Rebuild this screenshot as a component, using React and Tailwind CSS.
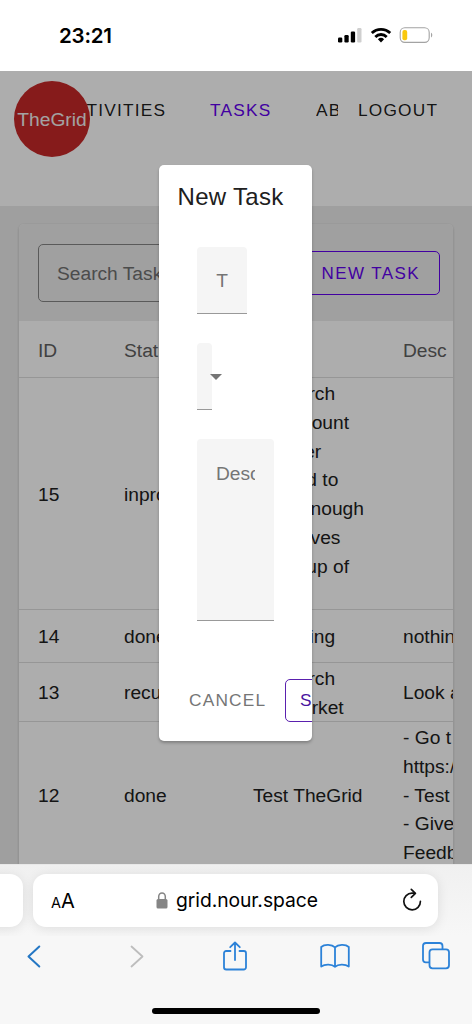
import React from "react";

const TASKS = [
  {
    id: 15,
    status: "inprogress",
    title: ["Research", "the amount", "of water", "needed to", "grow enough", "tea leaves", "for a cup of", "tea"],
    desc: [],
    height: "h-[232px]",
  },
  { id: 14, status: "done", title: ["Test thing"], desc: ["nothing"], height: "h-[53px]" },
  { id: 13, status: "recurring", title: ["Research", "the market"], desc: ["Look at"], height: "h-[59px]" },
  {
    id: 12,
    status: "done",
    title: ["Test TheGrid"],
    desc: ["- Go t", "https://grid", "- Test", "- Give", "Feedback"],
    height: "h-[146px]",
  },
];

const COLUMNS = "grid grid-cols-[86px_129px_150px_200px] items-center";

function Lines({ items }) {
  return (
    <div className="pt-[2px] pl-[19px] leading-[28.8px] whitespace-nowrap">
      {items.map((line) => (
        <div key={line}>{line}</div>
      ))}
    </div>
  );
}

function StatusBar() {
  return (
    <header className="flex h-[71px] shrink-0 items-start justify-between bg-white pt-[24px] pr-[39px] pl-[59px]">
      <span className="font-['Inter','Liberation_Sans',sans-serif] text-[20.5px] leading-[24px] font-semibold tracking-[-0.2px] text-black">
        23:21
      </span>
      <svg className="mt-[2px]" width="96" height="20" viewBox="0 0 96 20">
        <rect x="1" y="11.5" width="4.3" height="5" rx="1.2" />
        <rect x="7.4" y="9" width="4.3" height="7.5" rx="1.2" />
        <rect x="13.8" y="5.5" width="4.3" height="11" rx="1.2" />
        <rect x="20.2" y="2" width="4.3" height="14.5" rx="1.2" fill="#cfcfcf" />
        <g fill="none" stroke="#000" strokeWidth="2.8">
          <path d="M34.8 7.1a13.2 13.2 0 0 1 18.4 0" />
          <path d="M38.3 10.9a8 8 0 0 1 11.4 0" />
        </g>
        <path d="M40.9 13.3a4.5 4.5 0 0 1 6.2 0L44 16.6Z" />
        <rect x="63.2" y="1.8" width="29" height="14.6" rx="4.6" fill="none" stroke="#a3a3a3" strokeWidth="1.1" />
        <rect x="65.4" y="4" width="4.8" height="10.2" rx="2" fill="#f9c80e" />
        <path d="M94 6.8c1.7.6 1.7 4 0 4.6Z" fill="#a3a3a3" />
      </svg>
    </header>
  );
}

function NavBar() {
  return (
    <div className="relative h-[135px] shrink-0 bg-white pt-[25px]">
      <nav className="flex text-[17.3px] leading-[28px] tracking-[1.2px] whitespace-nowrap text-black/90">
        <span className="w-[210px] pl-[60px]">ACTIVITIES</span>
        <span className="w-[106px] text-[#6200ee]">TASKS</span>
        <span className="w-[22px] overflow-hidden">ABOUT</span>
        <span className="pl-[20px]">LOGOUT</span>
      </nav>
      <div className="absolute top-[10px] left-[14px] flex size-[76px] items-center justify-center rounded-full bg-[#c62828] pt-[2px] text-[19.2px] text-[#f0f0f0]">
        TheGrid
      </div>
    </div>
  );
}

function TaskTable() {
  return (
    <section className="mx-[19px] mt-[18px] h-[660px] w-[434px] shrink-0 overflow-hidden rounded-[5px] bg-white shadow-[0_1px_3px_rgba(0,0,0,0.2)]">
      <div className="flex h-[97px] items-center justify-between bg-[#ececec] pr-[13px] pl-[19px]">
        <div className="flex h-[58px] w-[240px] items-center rounded-[5px] border border-[#858585] pt-[3px] pl-[18px] text-[19.2px] text-[#707070]">
          Search Tasks
        </div>
        <div className="flex h-[44px] w-[140px] items-center justify-end rounded-[5px] border-[1.5px] border-[#6200ee] pt-[2px] pr-[19px] text-[17px] tracking-[1.4px] whitespace-nowrap text-[#6200ee]">
          NEW TASK
        </div>
      </div>
      <div className={`${COLUMNS} h-[57px] border-b border-[#dedede] pt-[2px] text-[#606060]`}>
        <Lines items={["ID"]} />
        <Lines items={["Status"]} />
        <Lines items={["Title"]} />
        <div className="w-[63px] overflow-hidden">
          <Lines items={["Desc"]} />
        </div>
      </div>
      {TASKS.map((task) => (
        <div key={task.id} className={`${COLUMNS} ${task.height} border-b border-[#dedede] text-[#202020]`}>
          <Lines items={[task.id]} />
          <Lines items={[task.status]} />
          <Lines items={task.title} />
          <Lines items={task.desc} />
        </div>
      ))}
    </section>
  );
}

function NewTaskDialog() {
  return (
    <div className="absolute inset-0 flex items-start bg-black/32 pt-[94px] pl-[159px]">
      <div className="flex h-[576px] w-[153px] flex-col overflow-hidden rounded-[5px] bg-white shadow-[0_2px_3px_rgba(0,0,0,0.25)]">
        <h2 className="pt-[13px] pl-[18.5px] text-[24px] leading-[38px] tracking-[0.3px] whitespace-nowrap text-[#202020]">
          New Task
        </h2>
        <div className="flex flex-col gap-[29px] pt-[31px] pl-[38px] text-[19.2px] text-[#757575]">
          <div className="flex h-[67px] w-[50px] items-center justify-center rounded-t-[4px] border-b border-[#999] bg-[#f5f5f5] pt-[3px]">
            T
          </div>
          <div className="flex items-center">
            <div className="h-[67px] w-[15px] shrink-0 rounded-t-[4px] border-b border-[#999] bg-[#f5f5f5]" />
            <svg className="-ml-[2px]" width="12" height="6" viewBox="0 0 12 6">
              <path d="M0 0h12L6 6Z" fill="#757575" />
            </svg>
          </div>
          <div className="h-[182px] w-[77px] rounded-t-[4px] border-b border-[#999] bg-[#f5f5f5] px-[19px] pt-[20px]">
            <div className="w-[39px] overflow-hidden leading-[29px]">Description</div>
          </div>
        </div>
        <div className="flex items-center pt-[58px] pl-[30px] text-[17.3px] tracking-[1.2px] whitespace-nowrap">
          <span className="w-[96px] shrink-0 text-[#757575]">CANCEL</span>
          <span className="flex h-[43px] w-[90px] shrink-0 items-center rounded-[5px] border-[1.5px] border-[#5a20ae] pl-[14px] text-[#4a16a0]">
            SAVE
          </span>
        </div>
      </div>
    </div>
  );
}

function BrowserBar() {
  return (
    <footer className="flex h-[160px] shrink-0 flex-col bg-[#f7f7f7]">
      <div className="flex h-[72px] overflow-hidden border-t border-[#e8e8e8] bg-linear-to-b from-[#f0f0f0] to-[#f7f7f7] pt-[9px]">
        <div className="-ml-[20px] h-[53px] w-[43px] shrink-0 rounded-[13px] bg-white shadow-[0_2px_12px_rgba(0,0,0,0.1)]" />
        <div className="ml-[10px] flex h-[53px] w-[405px] shrink-0 items-center justify-between rounded-[13px] bg-white pr-[16px] pl-[18px] font-['Inter','Liberation_Sans',sans-serif] text-black shadow-[0_2px_12px_rgba(0,0,0,0.1)]">
          <span className="flex w-[105px] items-baseline">
            <span className="text-[14.5px]">A</span>
            <span className="text-[20px]">A</span>
          </span>
          <span className="flex flex-1 items-center gap-[8px]">
            <svg width="12" height="17" viewBox="0 0 12 17">
              <rect x=".5" y="7" width="11" height="9.5" rx="1.5" fill="#858585" />
              <path d="M2.7 8V4.6a3.3 3.7 0 0 1 6.6 0V8" fill="none" stroke="#858585" strokeWidth="1.5" />
            </svg>
            <span className="text-[19.3px] tracking-[-0.05px]">grid.nour.space</span>
          </span>
          <svg className="-mt-[2px]" width="20" height="24" viewBox="0 0 20 24" fill="none" stroke="#111" strokeWidth="1.7" strokeLinecap="round" strokeLinejoin="round">
            <path d="M12.6 5.2H10a8.3 8.3 0 1 0 8.4 8.2" />
            <path d="m9.3 1.4 4.1 3.9-4.1 4" />
          </svg>
        </div>
      </div>
      <div className="flex h-[40px] items-center pl-[27px]">
        <svg width="14" height="23" viewBox="0 0 14 23" fill="none" stroke="#2477c4" strokeWidth="2" strokeLinecap="round" strokeLinejoin="round">
          <path d="M12.3 1.5 1.5 11.5l10.8 10" />
        </svg>
        <svg className="ml-[89px]" width="14" height="23" viewBox="0 0 14 23" fill="none" stroke="#bdbdbd" strokeWidth="1.8" strokeLinecap="round" strokeLinejoin="round">
          <path d="m1.5 1.5 11 10-11 10" />
        </svg>
        <svg className="ml-[79px]" width="24" height="30" viewBox="0 0 24 30" fill="none" stroke="#2c82d8" strokeWidth="1.8" strokeLinecap="round" strokeLinejoin="round">
          <path d="M7.5 10H3.2A2.2 2.2 0 0 0 1 12.2v14A2.3 2.3 0 0 0 3.3 28.5h17.4a2.3 2.3 0 0 0 2.3-2.3v-14A2.2 2.2 0 0 0 20.8 10h-4.3" />
          <path d="M12 19V1.5M7.2 6.2 12 1.5l4.8 4.7" />
        </svg>
        <svg className="ml-[73px]" width="30" height="24" viewBox="0 0 30 24" fill="none" stroke="#2c82d8" strokeWidth="1.8" strokeLinecap="round" strokeLinejoin="round">
          <path d="M15 3.4C12 .4 4.5 0 1.2 3v19.5C5 19.8 12 20 15 22.8c3-2.8 10-3 13.800-.3V3C25.500 0 18 .4 15 3.4Zm0 0v19.4" />
        </svg>
        <svg className="ml-[72px]" width="28" height="28" viewBox="0 0 28 28" fill="none" stroke="#2c82d8" strokeWidth="1.8" strokeLinecap="round" strokeLinejoin="round">
          <path d="M7 20.3H3.8A2.8 2.8 0 0 1 1 17.5V4a3 3 0 0 1 3-3h13.5a3 3 0 0 1 3 3v3" />
          <rect x="7.5" y="7.3" width="19.5" height="19" rx="3" />
        </svg>
      </div>
      <div className="mx-auto mt-[32px] h-[6px] w-[168px] rounded-full bg-black" />
    </footer>
  );
}

export default function App() {
  return (
    <div className="flex h-[1024px] w-[472px] flex-col overflow-hidden bg-white font-['Liberation_Sans',Arial,sans-serif]">
      <StatusBar />
      <main className="relative flex h-[793px] shrink-0 flex-col overflow-hidden bg-[#ebebeb] text-[19.2px]">
        <NavBar />
        <TaskTable />
        <NewTaskDialog />
      </main>
      <BrowserBar />
    </div>
  );
}
